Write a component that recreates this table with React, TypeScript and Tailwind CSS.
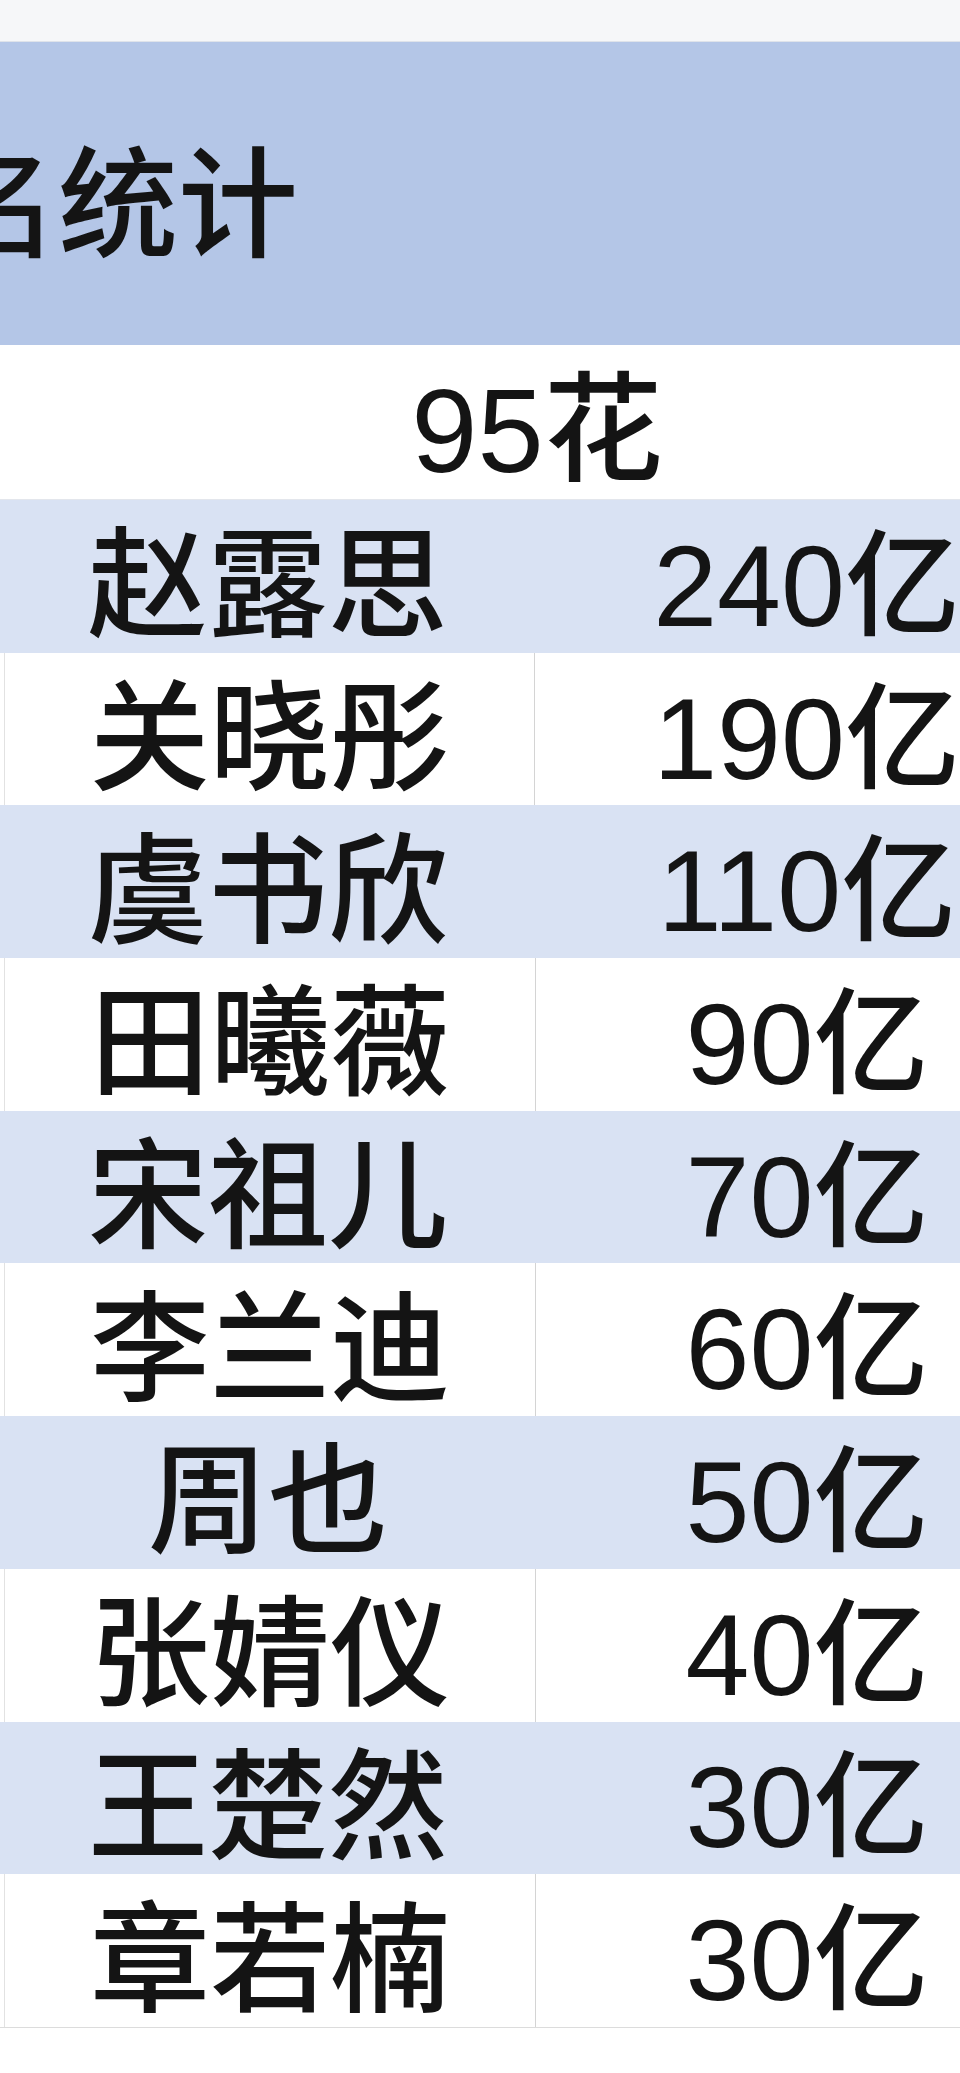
const rows = [
  { name: "赵露思", value: "240亿" },
  { name: "关晓彤", value: "190亿" },
  { name: "虞书欣", value: "110亿" },
  { name: "田曦薇", value: "90亿" },
  { name: "宋祖儿", value: "70亿" },
  { name: "李兰迪", value: "60亿" },
  { name: "周也", value: "50亿" },
  { name: "张婧仪", value: "40亿" },
  { name: "王楚然", value: "30亿" },
  { name: "章若楠", value: "30亿" },
]

export default function App() {
  return (
    <div className="w-[960px] h-[2073px] overflow-hidden bg-white text-[#141414] font-medium font-['Liberation_Sans','Noto_Sans_CJK_SC',sans-serif]">
      {/* top strip */}
      <div className="h-[42px] bg-[#f6f7f9] border-b border-[#dfe3ea]" />

      {/* title band */}
      <div className="h-[303px] bg-[#b4c6e7] flex items-center pt-[24px]">
        <span className="-ml-[62px] text-[120px] leading-none whitespace-nowrap">名统计</span>
      </div>

      {/* group header */}
      <div className="h-[155px] flex items-center justify-center pl-[114px] pt-[16px] border-b border-[#e3e6ec]">
        <span className="text-[119px] leading-none">95花</span>
      </div>

      {rows.map((r, i) => (
        <div
          key={r.name}
          className={
            i % 2 === 0
              ? "h-[152.7px] flex bg-[#d9e2f3]"
              : "h-[152.7px] flex bg-white"
          }
        >
          <div
            className={
              i % 2 === 0
                ? "w-[536px] flex items-center justify-center pt-[20px]"
                : "w-[532px] ml-[4px] flex items-center justify-center pt-[20px] border-l border-[#e2e2e2] border-r border-r-[#d4d4d4]"
            }
          >
            <span className="text-[120px] leading-none whitespace-nowrap">{r.name}</span>
          </div>
          <div className="flex-1 flex items-center justify-center pl-[118px] pt-[20px]">
            <span className="text-[115px] leading-none whitespace-nowrap">{r.value}</span>
          </div>
        </div>
      ))}

      <div className="border-t border-[#dcdcdc]" />
    </div>
  )
}
